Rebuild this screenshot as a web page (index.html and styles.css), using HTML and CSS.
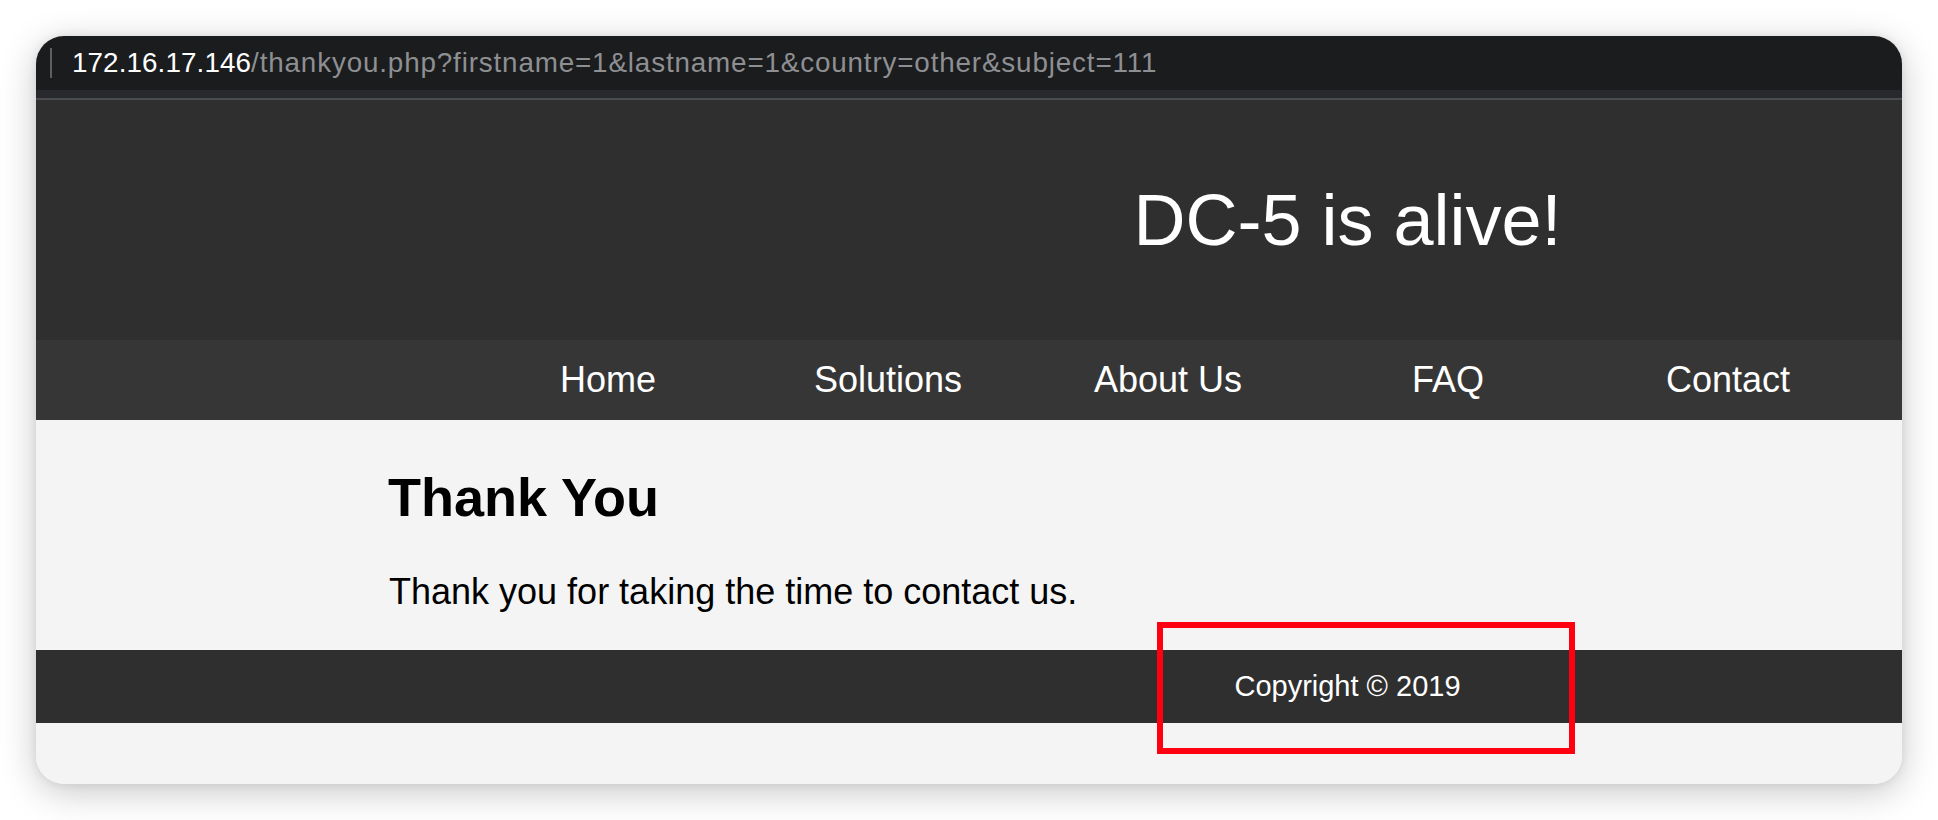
FILE: index.html
```html
<!DOCTYPE html>
<html lang="en">
<head>
<meta charset="utf-8">
<title>DC-5 is alive!</title>
<link rel="stylesheet" href="styles.css">
</head>
<body>
<div class="window">
  <div class="addressbar">
    <span class="caret"></span>
    <span class="url"><span class="host">172.16.17.146</span><span class="path">/thankyou.php?firstname=1&amp;lastname=1&amp;country=other&amp;subject=111</span></span>
  </div>
  <div class="tabstrip"></div>
  <div class="page">
    <header class="site-header">
      <h1 class="site-title">DC-5 is alive!</h1>
    </header>
    <nav class="site-nav">
      <a class="nav-item" href="#">Home</a>
      <a class="nav-item" href="#">Solutions</a>
      <a class="nav-item" href="#">About Us</a>
      <a class="nav-item" href="#">FAQ</a>
      <a class="nav-item" href="#">Contact</a>
    </nav>
    <main class="content">
      <h2 class="content-title">Thank You</h2>
      <p class="content-text">Thank you for taking the time to contact us.</p>
    </main>
    <footer class="site-footer">
      <span class="copyright">Copyright © 2019</span>
    </footer>
    <div class="page-bottom"></div>
  </div>
  <div class="highlight"></div>
</div>
</body>
</html>
```

FILE: styles.css
```css
html, body {
  margin: 0;
  padding: 0;
  background: #ffffff;
}

body {
  font-family: "Liberation Sans", Arial, Helvetica, sans-serif;
  padding: 36px 0 0 36px;
  width: 1938px;
  height: 820px;
  box-sizing: border-box;
  overflow: hidden;
}

.window {
  position: relative;
  width: 1866px;
  height: 748px;
  border-radius: 28px;
  overflow: hidden;
  background: #f4f4f4;
  box-shadow: 0 8px 36px rgba(0, 0, 0, 0.22), 0 0 10px rgba(0, 0, 0, 0.08);
  display: flex;
  flex-direction: column;
}

.addressbar {
  height: 54px;
  background: #1b1c1e;
  display: flex;
  align-items: center;
  padding-left: 14px;
  box-sizing: border-box;
}

.caret {
  width: 2px;
  height: 30px;
  background: #5e5f62;
  margin-right: 20px;
}

.url {
  font-family: "Liberation Sans", Arial, sans-serif;
  font-size: 27.8px;
  white-space: nowrap;
  line-height: 30px;
}

.host {
  color: #ffffff;
  letter-spacing: 0.1px;
}

.path {
  color: #8e8f92;
  letter-spacing: 0.85px;
}

.tabstrip {
  height: 8px;
  background: #28292d;
  border-bottom: 2px solid #4b4c4f;
}

.page {
  flex: 1;
  display: flex;
  flex-direction: column;
}

.site-header {
  height: 240px;
  background: #2f2f2f;
  padding: 79px 0 0 757px;
  box-sizing: border-box;
  text-align: center;
}

.site-title {
  margin: 0;
  font-weight: normal;
  font-size: 72px;
  line-height: 82.8px;
  color: #ffffff;
}

.site-nav {
  height: 80px;
  background: #363636;
  display: flex;
  justify-content: flex-end;
  padding-right: 34px;
}

.nav-item {
  width: 280px;
  text-align: center;
  font-size: 36px;
  line-height: 80px;
  color: #ffffff;
  text-decoration: none;
}

.content {
  height: 230px;
  box-sizing: border-box;
  padding: 46px 0 0 352px;
  background: #f4f4f4;
  color: #000000;
}

.content-title {
  margin: 0;
  font-size: 54px;
  font-weight: bold;
  line-height: 62px;
}

.content-text {
  margin: 43px 0 0 1px;
  font-size: 36px;
  line-height: 41.4px;
}

.site-footer {
  height: 73px;
  background: #2f2f2f;
  padding-left: 757px;
  text-align: center;
  color: #ffffff;
}

.copyright {
  font-size: 29px;
  line-height: 73px;
}

.page-bottom {
  flex: 1;
  background: #f4f4f4;
}

.highlight {
  position: absolute;
  left: 1121px;
  top: 586px;
  width: 418px;
  height: 132px;
  box-sizing: border-box;
  border: 6px solid #ff0010;
}
```
